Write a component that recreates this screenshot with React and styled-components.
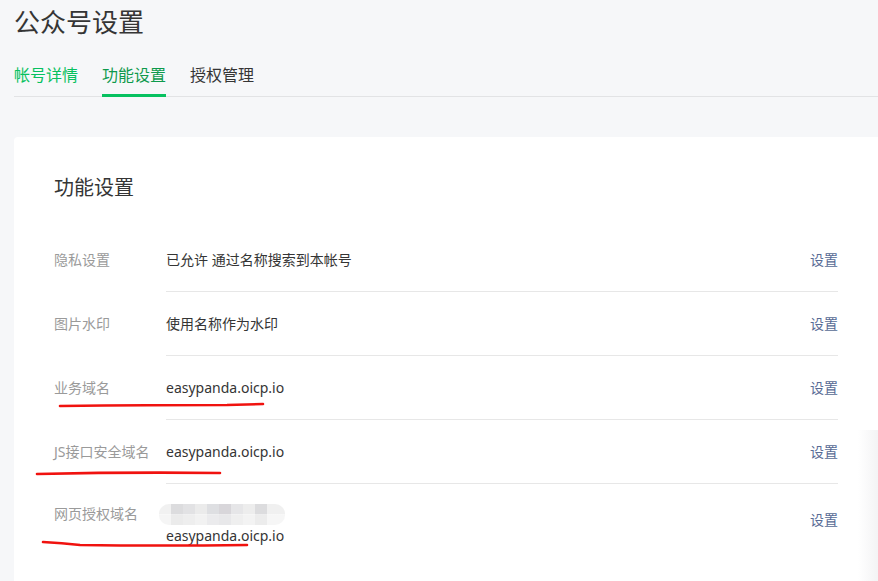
import styled, { createGlobalStyle } from "styled-components";

const GlobalStyle = createGlobalStyle`
html, body {
  margin: 0;
  padding: 0;
  background: #f6f7f9;
  font-family: "Noto Sans", "Noto Sans CJK SC", sans-serif;
}
`;

const rows = [
    { label: "隐私设置", value: "已允许 通过名称搜索到本帐号" },
    { label: "图片水印", value: "使用名称作为水印" },
    { label: "业务域名", value: "easypanda.oicp.io" },
    { label: "JS接口安全域名", value: "easypanda.oicp.io" },
    { label: "网页授权域名", value: "easypanda.oicp.io", blurred: true },
];

const tabs = [
    { name: "帐号详情", tone: "light" },
    { name: "功能设置", tone: "active" },
    { name: "授权管理", tone: "plain" },
];

export default function App() {
    return (
        <Page>
            <GlobalStyle />
            <Title>公众号设置</Title>
            <TabBar>
                {tabs.map((t) => (
                    <Tab key={t.name} tone={t.tone}>{t.name}</Tab>
                ))}
            </TabBar>
            <Card>
                <CardTitle>功能设置</CardTitle>
                {rows.map((r) => (
                    <Row key={r.label} tall={r.blurred}>
                        <Label tall={r.blurred}>{r.label}</Label>
                        <Content tall={r.blurred}>
                            <Value>
                                {r.blurred && <Blur />}
                                <span>{r.value}</span>
                            </Value>
                            <Action tall={r.blurred}>设置</Action>
                        </Content>
                    </Row>
                ))}
            </Card>
            <Marks viewBox="0 0 878 581" width="878" height="581">
                <path d="M60 406 Q150 405 227 405 L263 404" />
                <path d="M37 474 Q130 472 220 473" />
                <path d="M43 542 Q62 543 80 545 Q160 546 247 545" />
            </Marks>
            <SideShade />
        </Page>
    );
}

const Page = styled.div`
position: relative;
width: 878px;
height: 581px;
overflow: hidden;
padding: 4px 0 0 14px;
box-sizing: border-box;
`;

const Title = styled.h1`
margin: 0;
font-size: 26px;
line-height: 36px;
font-weight: 400;
color: #353535;
`;

const TabBar = styled.div`
display: flex;
gap: 24px;
margin-top: 23px;
border-bottom: 1px solid #e2e3e5;
`;

const Tab = styled.div`
font-size: 16px;
line-height: 24px;
padding-bottom: 7px;
margin-bottom: -1px;
color: ${(p) => (p.tone === "light" ? "#07c160" : p.tone === "active" ? "#0e9a4c" : "#353535")};
border-bottom: 3px solid ${(p) => (p.tone === "active" ? "#07c160" : "transparent")};
`;

const Card = styled.div`
margin-top: 40px;
background: #fff;
border-radius: 4px 0 0 4px;
padding: 36px 40px 0 40px;
height: 460px;
box-sizing: border-box;
`;

const CardTitle = styled.h2`
margin: 0 0 25px;
font-size: 20px;
line-height: 30px;
font-weight: 400;
color: #353535;
`;

const Row = styled.div`
display: flex;
align-items: ${(p) => (p.tall ? "flex-start" : "center")};
`;

const Label = styled.div`
width: 112px;
flex-shrink: 0;
font-size: 14px;
line-height: 22px;
color: #9a9a9a;
padding-top: ${(p) => (p.tall ? "19px" : "0")};
`;

const Content = styled.div`
flex: 1;
display: flex;
align-items: ${(p) => (p.tall ? "flex-start" : "center")};
justify-content: space-between;
height: ${(p) => (p.tall ? "auto" : "63px")};
padding-top: ${(p) => (p.tall ? "20px" : "0")};
border-bottom: ${(p) => (p.tall ? "none" : "1px solid #e7e7e7")};
`;

const Value = styled.div`
display: flex;
flex-direction: column;
align-items: flex-start;
font-size: 14px;
line-height: 22px;
color: #353535;
`;

const Blur = styled.div`
width: 126px;
height: 21px;
margin-left: -7px;
border-radius: 10px;
background:
  linear-gradient(90deg, #f1f1f1 0 12px, #dcdcde 12px 24px, #e2e2e4 24px 36px, #ebebeb 36px 48px, #dedfe2 48px 60px, #d8d6da 60px 72px, #e6e6e8 72px 84px, #ededed 84px 96px, #dcdcde 96px 108px, #f0f0f0 108px) top / 100% 50% no-repeat,
  linear-gradient(90deg, #f5f5f5 0 12px, #ebebeb 12px 24px, #eeeeee 24px 36px, #f2f2f2 36px 48px, #ebebed 48px 60px, #e8e8ea 60px 72px, #efefef 72px 84px, #f3f3f3 84px 96px, #ececec 96px 108px, #f6f6f6 108px) bottom / 100% 50% no-repeat;
`;

const Action = styled.div`
font-size: 14px;
line-height: 22px;
color: #576b95;
margin-top: ${(p) => (p.tall ? "5px" : "0")};
`;

const Marks = styled.svg`
position: absolute;
left: 0;
top: 0;
pointer-events: none;
fill: none;
stroke: #f0120f;
stroke-width: 2.6;
stroke-linecap: round;
`;

const SideShade = styled.div`
position: absolute;
right: 0;
top: 430px;
width: 20px;
height: 151px;
background: linear-gradient(90deg, rgba(240, 240, 242, 0) 0%, rgba(238, 238, 240, 0.7) 100%);
pointer-events: none;
`;
